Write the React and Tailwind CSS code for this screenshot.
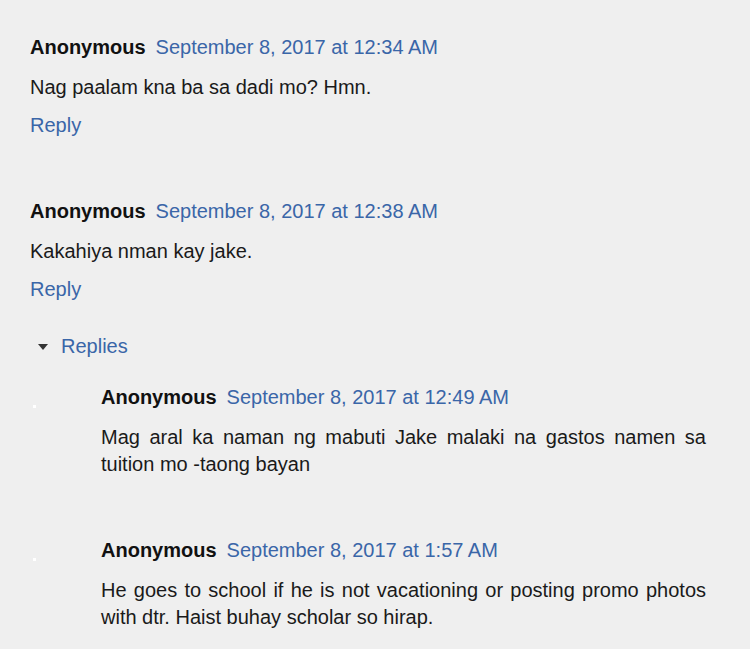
import React from 'react';

const comments = [
  {
    id: 1,
    date: 'September 8, 2017 at 12:34 AM',
    body: 'Nag paalam kna ba sa dadi mo? Hmn.',
  },
  {
    id: 2,
    date: 'September 8, 2017 at 12:38 AM',
    body: 'Kakahiya nman kay jake.',
    replies: [
      {
        id: 3,
        date: 'September 8, 2017 at 12:49 AM',
        body: 'Mag aral ka naman ng mabuti Jake malaki na gastos namen sa tuition mo -taong bayan',
      },
      {
        id: 4,
        date: 'September 8, 2017 at 1:57 AM',
        body: 'He goes to school if he is not vacationing or posting promo photos with dtr. Haist buhay scholar so hirap.',
      },
    ],
  },
];

function Header({ date }) {
  return (
    <div className="leading-[27px] whitespace-nowrap">
      <span className="font-bold text-[#111]">Anonymous</span>
      <a className="ml-[10px] text-[#3a66a8]">{date}</a>
    </div>
  );
}

export default function App() {
  return (
    <div
      className="w-[750px] h-[649px] overflow-hidden bg-[#efefef] text-[20px] text-[#1a1a1a] pt-[34px] pl-[30px]"
      style={{ fontFamily: '"Liberation Sans", Arial, sans-serif' }}
    >
      {comments.map((c, i) => (
        <div key={c.id} className={i > 0 ? 'mt-[59px]' : ''}>
          <Header date={c.date} />
          <p className="mt-[13px] leading-[27px]">{c.body}</p>
          <a className="block mt-[11px] leading-[27px] text-[#3a66a8]">Reply</a>

          {c.replies && (
            <div className="mt-[30px]">
              <div className="flex items-center pl-[8px] leading-[27px]">
                <span className="w-0 h-0 border-l-[5px] border-r-[5px] border-t-[6px] border-l-transparent border-r-transparent border-t-[#333]" />
                <span className="ml-[13px] text-[#3a66a8]">Replies</span>
              </div>

              <div className="mt-[24px]">
                {c.replies.map((r, j) => (
                  <div key={r.id} className={'relative pl-[71px] w-[676px] ' + (j > 0 ? 'mt-[59px]' : '')}>
                    <span className="absolute left-[3px] top-[21px] w-[3px] h-[3px] bg-white" />
                    <Header date={r.date} />
                    <p className="mt-[13px] leading-[27px] text-justify">{r.body}</p>
                  </div>
                ))}
              </div>
            </div>
          )}
        </div>
      ))}
    </div>
  );
}
